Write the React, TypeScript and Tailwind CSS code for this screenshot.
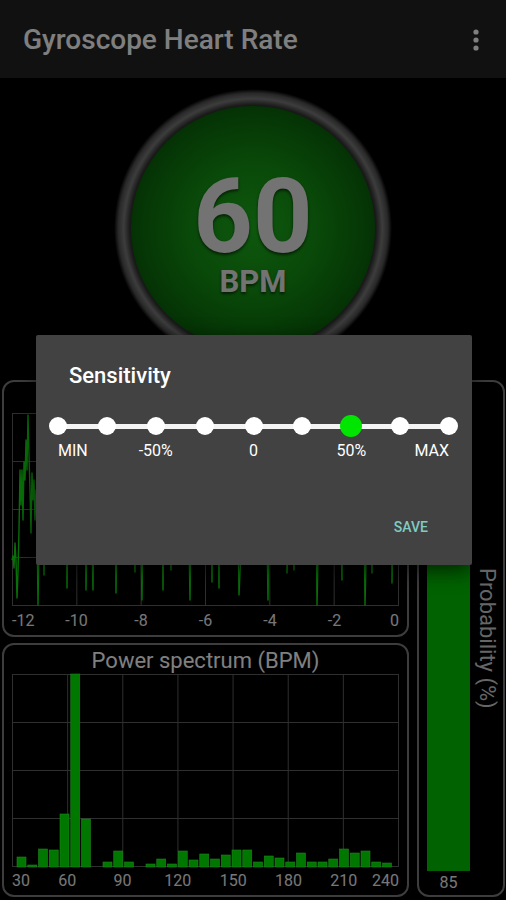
import React from 'react';

// bar heights of the power spectrum, in px of a 193px tall plot
const SPECTRUM = [10, 2, 18, 17, 53, 193, 48, 0, 5, 16, 5, 0, 3, 8, 3, 16, 7, 13, 8, 12, 17, 17, 5, 11, 9, 5, 14, 5, 5, 8, 18, 14, 16, 5, 4];

const SPIKES: [number, number][] = [
  [38, 605], [44, 575], [67, 588], [86, 590], [93, 590], [116, 593], [135, 572], [142, 600], [163, 590], [171, 570], [190, 600],
  [212, 582], [219, 588], [239, 595], [268, 600], [287, 573], [294, 570], [317, 605], [342, 580], [365, 605], [372, 573], [392, 583],
];

function buildSignal(): string {
  const pts: [number, number][] = [
    [12, 560], [13, 556], [14, 568], [15, 543], [16, 560], [17, 598], [18, 572], [19, 530], [20, 470], [21, 505], [22, 470],
    [23, 520], [24, 462], [25, 480], [26, 440], [27, 470], [28, 415], [29, 455], [30, 490], [31, 533], [32, 473], [33, 500],
    [34, 480], [35, 520], [36, 490],
  ];
  for (let x = 37; x <= 399; x += 1.5) {
    const spike = SPIKES.find(([sx]) => Math.abs(sx - x) <= 0.75);
    if (spike) pts.push([spike[0], spike[1]]);
    else pts.push([x, 505 + Math.sin(x * 1.7) * 30 + Math.sin(x * 0.37) * 20]);
  }
  return pts.map(([x, y]) => `${x - 12},${y - 413}`).join(' ');
}

const SIGNAL = buildSignal();

const PLOT_W = 387;
const PLOT_H = 193;

const Grid: React.FC<{ cols: number }> = ({ cols }) => (
  <g stroke="#5e5e5e" strokeWidth="1">
    {Array.from({ length: cols + 1 }).map((_, i) => {
      const x = 0.5 + (i * (PLOT_W - 1)) / cols;
      return <line key={'v' + i} x1={x} y1={0} x2={x} y2={PLOT_H} />;
    })}
    {Array.from({ length: 5 }).map((_, i) => {
      const y = 0.5 + (i * (PLOT_H - 1)) / 4;
      return <line key={'h' + i} x1={0} y1={y} x2={PLOT_W} y2={y} />;
    })}
  </g>
);

const AxisLabels: React.FC<{ labels: string[]; y: number }> = ({ labels, y }) => (
  <g fill="#eeeeee" fontSize="16" fontFamily="Roboto, sans-serif">
    {labels.map((l, i) => {
      const x = (i * PLOT_W) / (labels.length - 1);
      const anchor = i === 0 ? 'start' : i === labels.length - 1 ? 'end' : 'middle';
      return (
        <text key={l} x={x} y={y} textAnchor={anchor}>
          {l}
        </text>
      );
    })}
  </g>
);

const SignalChart = () => (
  <svg width={PLOT_W} height={PLOT_H + 28} className="overflow-visible">
    <Grid cols={6} />
    <polyline points={SIGNAL} fill="none" stroke="#12e012" strokeWidth="1.4" strokeLinejoin="round" />
    <AxisLabels labels={['-12', '-10', '-8', '-6', '-4', '-2', '0']} y={213} />
  </svg>
);

const SpectrumChart = () => (
  <svg width={PLOT_W} height={PLOT_H + 28} className="overflow-visible">
    <Grid cols={7} />
    {SPECTRUM.map((h, i) =>
      h > 0 ? <rect key={i} x={5 + i * 10.75} y={PLOT_H - h} width={9} height={h} fill="#00f000" stroke="#40ff40" strokeWidth="0.6" /> : null
    )}
    <AxisLabels labels={['30', '60', '90', '120', '150', '180', '210', '240']} y={212} />
  </svg>
);

const SENS_LABELS = ['MIN', '', '-50%', '', '0', '', '50%', '', 'MAX'];

export default function App() {
  const selected = 6;
  return (
    <div className="relative w-[506px] h-[900px] bg-black overflow-hidden font-[Roboto,sans-serif]">
      <header className="h-[78px] bg-[#222222] flex items-center justify-between pl-[23px] pr-[26px] pt-[2px]">
        <h1 className="text-[28px] font-medium text-white leading-none">Gyroscope Heart Rate</h1>
        <svg width="8" height="24" viewBox="0 0 8 24">
          <circle cx="4" cy="4" r="2.6" fill="#fff" />
          <circle cx="4" cy="12" r="2.6" fill="#fff" />
          <circle cx="4" cy="20" r="2.6" fill="#fff" />
        </svg>
      </header>

      <div className="h-[300px] flex items-center justify-center">
        <div className="w-[278px] h-[278px] rounded-full flex items-center justify-center bg-[radial-gradient(circle_closest-side,#1a1a1a_86%,#3a3a3a_89%,#7a7a7a_93%,#505050_97%,#000_100%)]">
          <div className="w-[244px] h-[244px] rounded-full flex flex-col items-center justify-center pt-[15px] bg-[radial-gradient(circle_closest-side,#1cb01c_0%,#129012_55%,#0a640a_100%)] text-[#e6e6e6] font-bold [text-shadow:0_2px_3px_rgba(0,0,0,0.6)]">
            <span className="text-[104px] leading-[84px]">60</span>
            <span className="text-[31px] leading-none mt-[7px]">BPM</span>
          </div>
        </div>
      </div>

      <div className="flex pl-[2px] pr-[1px] pt-[2px] gap-[8px]">
        <div className="w-[407px] flex flex-col gap-[6px]">
          <div className="h-[257px] border-2 border-[#7a7a7a] rounded-[12px] pt-[31px] pl-[8px]">
            <SignalChart />
          </div>
          <div className="h-[254px] border-2 border-[#7a7a7a] rounded-[12px] flex flex-col">
            <div className="h-[33px] pt-[3px] flex items-center justify-center text-[22px] text-white leading-none">
              Power spectrum (BPM)
            </div>
            <div className="pl-[8px]">
              <SpectrumChart />
            </div>
          </div>
        </div>
        <div className="w-[88px] h-[517px] border-2 border-[#7a7a7a] rounded-[12px] flex">
          <div className="pl-[8px] flex flex-col justify-end">
            <div className="w-[43px] h-[389px] bg-[#00c400]" />
            <div className="h-[24px] flex items-center justify-center text-[16px] text-[#eeeeee] leading-none">85</div>
          </div>
          <div className="flex-1 flex items-center justify-center">
            <span className="[writing-mode:vertical-rl] text-[22px] text-[#cccccc] leading-none whitespace-nowrap">Probability (%)</span>
          </div>
        </div>
      </div>

      {/* dialog backdrop */}
      <div className="absolute inset-0 bg-black/50" />

      <div className="absolute left-[36px] top-[335px] w-[436px] h-[230px] bg-[#424242] rounded-[2px] shadow-[0_6px_20px_rgba(0,0,0,0.6)] flex flex-col pt-[30px]">
        <h2 className="pl-[33px] text-[22px] font-medium text-white leading-none">Sensitivity</h2>
        <div className="mt-[28px] ml-[22px] mr-[23px]">
          <div className="h-[22px] flex items-center justify-between bg-[linear-gradient(#f4f4f4,#f4f4f4)] bg-no-repeat bg-center bg-[length:100%_5px]">
            {SENS_LABELS.map((_, i) => (
              <div key={i} className="w-0 flex justify-center items-center">
                {i === selected ? (
                  <div className="shrink-0 w-[22px] h-[22px] rounded-full bg-[#00e600]" />
                ) : (
                  <div className="shrink-0 w-[18px] h-[18px] rounded-full bg-white" />
                )}
              </div>
            ))}
          </div>
          <div className="mt-[6px] flex justify-between">
            {SENS_LABELS.map((l, i) => (
              <div
                key={i}
                className={`w-0 flex ${i === 0 ? 'justify-start' : i === SENS_LABELS.length - 1 ? 'justify-end' : 'justify-center'}`}
              >
                <span className="shrink-0 whitespace-nowrap text-[16px] text-white leading-none">{l}</span>
              </div>
            ))}
          </div>
        </div>
        <div className="mt-auto pb-[31px] pr-[44px] flex justify-end">
          <span className="text-[14px] font-medium text-[#80cbc4] leading-none">SAVE</span>
        </div>
      </div>
    </div>
  );
}
